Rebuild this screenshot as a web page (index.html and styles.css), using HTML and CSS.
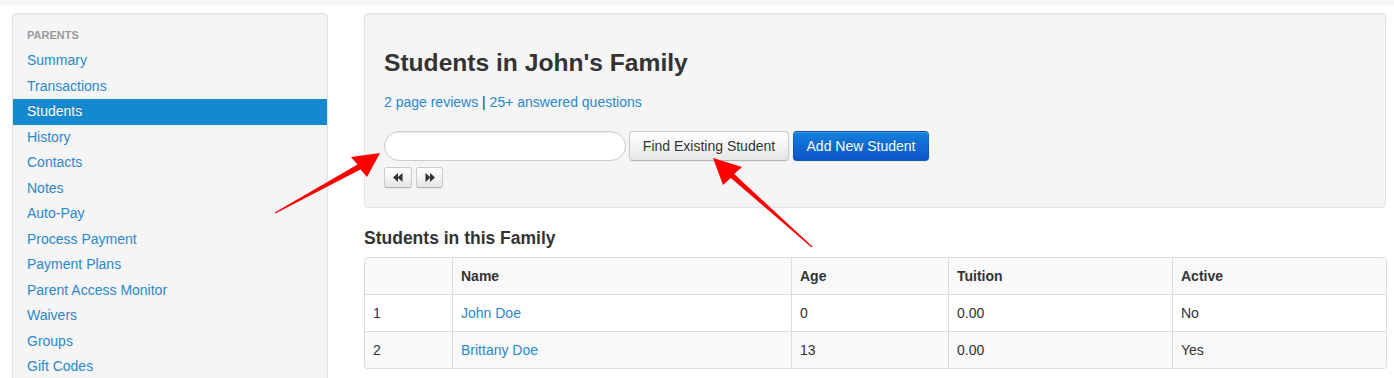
FILE: index.html
```html
<!DOCTYPE html>
<html>
<head>
<meta charset="utf-8">
<title>Students in John's Family</title>
<link rel="stylesheet" href="styles.css">
</head>
<body>
<div class="topbar"></div>
<div class="layout">
  <aside class="sidebar">
    <ul class="nav-list">
      <li class="nav-header">Parents</li>
      <li><a href="#">Summary</a></li>
      <li><a href="#">Transactions</a></li>
      <li class="active"><a href="#">Students</a></li>
      <li><a href="#">History</a></li>
      <li><a href="#">Contacts</a></li>
      <li><a href="#">Notes</a></li>
      <li><a href="#">Auto-Pay</a></li>
      <li><a href="#">Process Payment</a></li>
      <li><a href="#">Payment Plans</a></li>
      <li><a href="#">Parent Access Monitor</a></li>
      <li><a href="#">Waivers</a></li>
      <li><a href="#">Groups</a></li>
      <li><a href="#">Gift Codes</a></li>
    </ul>
  </aside>
  <main class="content">
    <section class="well">
      <h2 class="title">Students in John's Family</h2>
      <p class="meta"><a href="#">2 page reviews</a> | <a href="#">25+ answered questions</a></p>
      <div class="search-row">
        <input class="search-query" type="text">
        <button class="btn btn-find">Find Existing Student</button>
        <button class="btn btn-primary">Add New Student</button>
      </div>
      <div class="pager">
        <button class="btn btn-mini"><svg width="10" height="9" viewBox="0 0 10 9"><polygon points="0,4.5 5,0 5,9" fill="#333"/><polygon points="4.5,4.5 9.5,0 9.5,9" fill="#333"/></svg></button>
        <button class="btn btn-mini"><svg width="10" height="9" viewBox="0 0 10 9"><polygon points="10,4.5 5,0 5,9" fill="#333"/><polygon points="5.5,4.5 0.5,0 0.5,9" fill="#333"/></svg></button>
      </div>
    </section>
    <h4 class="section-title">Students in this Family</h4>
    <table class="students">
      <colgroup>
        <col class="c-num"><col class="c-name"><col class="c-age"><col class="c-tuition"><col class="c-active">
      </colgroup>
      <thead>
        <tr><th></th><th>Name</th><th>Age</th><th>Tuition</th><th>Active</th></tr>
      </thead>
      <tbody>
        <tr><td>1</td><td><a href="#">John Doe</a></td><td>0</td><td>0.00</td><td>No</td></tr>
        <tr class="alt"><td>2</td><td><a href="#">Brittany Doe</a></td><td>13</td><td>0.00</td><td>Yes</td></tr>
      </tbody>
    </table>
  </main>
</div>
<svg class="arrows" width="1394" height="378" viewBox="0 0 1394 378">
  <polygon fill="#ff0000" points="274.7,212.6 357.5,164.4 351,157 380,153 367,177 360.5,169.6 275.3,213.4"/>
  <polygon fill="#ff0000" points="812.4,246.6 734.2,174.1 742,167 713,158 723,185 730.8,177.9 811.6,247.4"/>
</svg>
</body>
</html>
```
FILE: styles.css
```css
* { box-sizing: border-box; }
html, body { margin: 0; padding: 0; }
body {
  font-family: "Liberation Sans", Arial, Helvetica, sans-serif;
  font-size: 14px;
  line-height: 20px;
  color: #333;
  background: #fff;
  width: 1394px;
  height: 378px;
  overflow: hidden;
  position: relative;
}
a { color: #2a88cc; text-decoration: none; }

.topbar { height: 5px; background: #f7f7f7; }

.layout {
  display: flex;
  gap: 36px;
  padding: 8px 8px 0 12px;
}

.sidebar {
  width: 316px;
  flex: none;
  background: #f5f5f5;
  border: 1px solid #e3e3e3;
  border-radius: 4px;
  padding: 9px 0;
  box-shadow: inset 0 1px 1px rgba(0,0,0,0.05);
}
.nav-list { list-style: none; margin: 0; padding: 0; }
.nav-list li a {
  display: block;
  padding: 3px 14px;
  line-height: 19.5px;
  color: #2a88cc;
}
.nav-list .nav-header {
  padding: 3px 14px;
  line-height: 19px;
  font-size: 11px;
  font-weight: bold;
  color: #999;
  text-transform: uppercase;
  text-shadow: 0 1px 0 rgba(255,255,255,0.5);
}
.nav-list li.active a {
  background: #1589cd;
  color: #fff;
  text-shadow: 0 -1px 0 rgba(0,0,0,0.2);
}

.content { flex: 1; min-width: 0; }

.well {
  background: #f5f5f5;
  border: 1px solid #e3e3e3;
  border-radius: 4px;
  padding: 28px 19px 19px;
  box-shadow: inset 0 1px 1px rgba(0,0,0,0.05);
}
.title {
  margin: 0;
  font-size: 24.6px;
  line-height: 41px;
  font-weight: bold;
  color: #333;
}
.meta { margin: 9px 0 0; line-height: 20px; }

.search-row {
  display: flex;
  gap: 3px;
  margin-top: 19px;
  align-items: flex-start;
}
.search-query {
  width: 242px;
  height: 30px;
  border: 1px solid #ccc;
  border-radius: 15px;
  background: #fff;
  box-shadow: inset 0 1px 1px rgba(0,0,0,0.075);
  padding: 4px 14px;
  font: inherit;
  margin: 0;
}
.btn {
  height: 30px;
  padding: 4px 12px;
  font: inherit;
  font-size: 14px;
  line-height: 20px;
  color: #333;
  background-color: #f5f5f5;
  background-image: linear-gradient(to bottom, #ffffff, #e6e6e6);
  border: 1px solid #ccc;
  border-bottom-color: #b3b3b3;
  border-radius: 4px;
  box-shadow: inset 0 1px 0 rgba(255,255,255,0.2), 0 1px 2px rgba(0,0,0,0.05);
  text-shadow: 0 1px 1px rgba(255,255,255,0.75);
  margin: 0;
  cursor: pointer;
}
.btn-find { width: 160px; padding: 4px 0; }
.btn-primary {
  width: 136px;
  padding: 4px 0;
  margin-left: 1px;
  color: #fff;
  background-image: linear-gradient(to bottom, #1580dd, #0b55c9);
  border-color: rgba(0,0,0,0.1) rgba(0,0,0,0.1) rgba(0,0,0,0.25);
  text-shadow: 0 -1px 0 rgba(0,0,0,0.25);
}
.pager { display: flex; gap: 4px; margin-top: 6px; }
.btn-mini {
  width: 28px;
  height: 21px;
  padding: 0;
  display: flex;
  align-items: center;
  justify-content: center;
  border-radius: 3px;
}
.btn-mini + .btn-mini { width: 27px; }

.section-title {
  margin: 20px 0 9px;
  font-size: 17.5px;
  line-height: 20px;
  font-weight: bold;
  color: #333;
}

.students {
  width: 100%;
  border-collapse: separate;
  border-spacing: 0;
  border: 1px solid #ddd;
  border-left: 0;
  border-radius: 4px;
  table-layout: fixed;
}
.c-num { width: 88px; }
.c-name { width: 339px; }
.c-age { width: 157px; }
.c-tuition { width: 224px; }
.c-active { width: 214px; }
.students th, .students td {
  padding: 8px;
  line-height: 20px;
  text-align: left;
  border-left: 1px solid #ddd;
  border-top: 1px solid #ddd;
  vertical-align: top;
}
.students thead th { border-top: 0; background: #f9f9f9; font-weight: bold; }
.students thead th:first-child { border-top-left-radius: 4px; }
.students thead th:last-child { border-top-right-radius: 4px; }
.students tr.alt td { background: #f9f9f9; }
.students tbody tr:last-child td:first-child { border-bottom-left-radius: 4px; }
.students tbody tr:last-child td:last-child { border-bottom-right-radius: 4px; }

.arrows {
  position: absolute;
  left: 0;
  top: 0;
  pointer-events: none;
}
```
